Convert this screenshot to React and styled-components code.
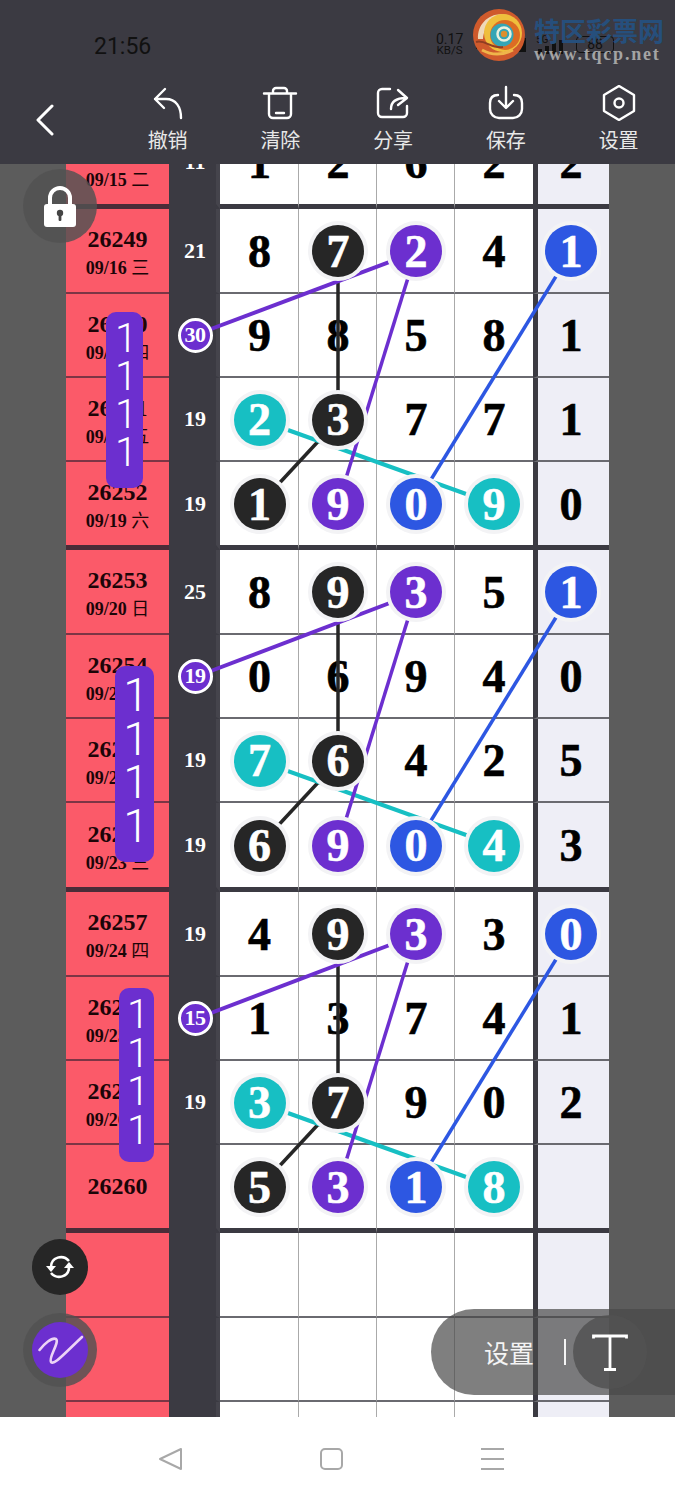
import React from "react"
import styled, { createGlobalStyle } from "styled-components"

const SERIF = '"Liberation Serif", "Noto Sans CJK SC", serif'
const SANS = 'Roboto, "Noto Sans CJK SC", sans-serif'

const DARK = "#3b3a42"
const PURPLE = "#6c2fcf"
const TEAL = "#17bfc3"
const BLUE = "#2d57e2"
const BLACK = "#262626"
const BALL = { k: BLACK, p: PURPLE, t: TEAL, b: BLUE }

const row = (serial, date, week, sum, cells, last, h, marker) => ({ serial, date, week, sum, cells, last, h, marker })

const rows = [
  row("26248", "09/15", "二", "11", ["1", "2", "6", "2"], "2", 89),
  row("26249", "09/16", "三", "21", ["8", "7k", "2p", "4"], "1b", 85),
  row("26250", "09/17", "四", "30", ["9", "8", "5", "8"], "1", 84, true),
  row("26251", "09/18", "五", "19", ["2t", "3k", "7", "7"], "1", 84),
  row("26252", "09/19", "六", "19", ["1k", "9p", "0b", "9t"], "0", 88),
  row("26253", "09/20", "日", "25", ["8", "9k", "3p", "5"], "1b", 85),
  row("26254", "09/21", "一", "19", ["0", "6", "9", "4"], "0", 84, true),
  row("26255", "09/22", "二", "19", ["7t", "6k", "4", "2"], "5", 84),
  row("26256", "09/23", "三", "19", ["6k", "9p", "0b", "4t"], "3", 89),
  row("26257", "09/24", "四", "19", ["4", "9k", "3p", "3"], "0b", 85),
  row("26258", "09/25", "五", "15", ["1", "3", "7", "4"], "1", 84, true),
  row("26259", "09/26", "六", "19", ["3t", "7k", "9", "0"], "2", 84),
  row("26260", "", "", "", ["5k", "3p", "1b", "8t"], "", 88),
  row("", "", "", "", ["", "", "", ""], "", 85),
  row("", "", "", "", ["", "", "", ""], "", 84),
  row("", "", "", "", ["", "", "", ""], "", 84),
]

// y of the ball rows in each block, on the page
const blocks = [
  { top: 252, bottom: 504, mid: 420, marker: 335 },
  { top: 593, bottom: 845, mid: 761, marker: 677 },
  { top: 935, bottom: 1187, mid: 1103, marker: 1019 },
]

const GlobalStyle = createGlobalStyle`
  html, body {
    margin: 0;
    padding: 0;
    background: #fff;
  }
`

const Page = styled.div`
  width: 675px;
  height: 1500px;
  overflow: hidden;
  display: flex;
  flex-direction: column;
  font-family: ${SANS};
`

const Header = styled.header`
  position: relative;
  z-index: 5;
  height: 164px;
  background: ${DARK};
`

const StatusBar = styled.div`
  height: 78px;
  display: flex;
  align-items: center;
  padding: 15px 61px 0 94px;
  box-sizing: border-box;
  color: #111;
`

const Time = styled.div`
  font-size: 23px;
  line-height: 28px;
`

const StatusRight = styled.div`
  margin-left: auto;
  margin-top: -5px;
  display: flex;
  align-items: center;
`

const Speed = styled.div`
  width: 27px;
  margin-right: 13px;
  text-align: center;
  font-size: 14px;
  line-height: 12px;
  small {
    display: block;
    font-size: 11.5px;
    line-height: 10px;
  }
`

const Battery = styled.div`
  width: 38px;
  height: 17px;
  margin-left: 10px;
  border: 1.5px solid #111;
  border-radius: 4px;
  box-sizing: border-box;
  font-size: 14px;
  line-height: 14px;
  text-align: center;
`

const Watermark = styled.div`
  position: absolute;
  left: 473px;
  top: 9px;
  display: flex;
  gap: 9px;
`

const MarkText = styled.div`
  padding-top: 6px;
  strong {
    display: block;
    font-family: "Noto Sans CJK SC", sans-serif;
    font-size: 26px;
    line-height: 30px;
    color: #264f7c;
    white-space: nowrap;
  }
  span {
    display: block;
    margin-top: -1px;
    font-family: ${SERIF};
    font-weight: 700;
    font-size: 18px;
    line-height: 20px;
    letter-spacing: 1.8px;
    color: #a4a4a4;
    white-space: nowrap;
  }
`

const Toolbar = styled.div`
  height: 86px;
  display: flex;
  align-items: flex-start;
  padding: 7px 0 0 36px;
  box-sizing: border-box;
`

const Back = styled.svg`
  width: 18px;
  height: 32px;
  margin-top: 19px;
`

const Tools = styled.div`
  margin-left: auto;
  display: grid;
  grid-template-columns: repeat(5, 112.75px);
`

const Tool = styled.div`
  display: flex;
  flex-direction: column;
  align-items: center;
  gap: 6px;
  color: #e8e8e8;
  font-size: 20px;
  line-height: 28px;
`

const ToolIcon = styled.svg`
  width: 36px;
  height: 36px;
  fill: none;
  stroke: #fff;
  stroke-width: 2.4;
  stroke-linecap: round;
  stroke-linejoin: round;
`

const Main = styled.main`
  position: relative;
  height: 1253px;
  overflow: hidden;
  background: #5c5c5c;
`

const Sheet = styled.div`
  width: 543px;
  margin: -44px 0 0 66px;
`

const Row = styled.div`
  display: grid;
  grid-template-columns: 103px 51px 79px 78px 78px 78px 76px;
  height: ${(p) => p.$h}px;
`

const lineAt = (thin, thick) => (p) =>
  p.$end ? `border-bottom: 5px solid ${thick};` : `border-bottom: 2px solid ${thin};`

const Cell = styled.div`
  box-sizing: border-box;
  display: flex;
  align-items: center;
  justify-content: center;
`

const DateCell = styled(Cell)`
  flex-direction: column;
  background: #fb5a69;
  color: #1c0508;
  font-family: ${SERIF};
  font-weight: 700;
  ${lineAt("#7c3545", "#4a2c38")}
`

const Serial = styled.div`
  font-size: 24px;
  line-height: 29px;
`

const Day = styled.div`
  font-size: 18px;
  line-height: 29px;
  margin-bottom: -7px;
  white-space: nowrap;
  span {
    font-weight: 400;
  }
`

const SumCell = styled(Cell)`
  background: ${DARK};
  border-right: 4px solid #45444c;
  padding-left: 5px;
  color: #fff;
  font-family: ${SERIF};
  font-weight: 700;
  font-size: 22px;
  ${lineAt(DARK, DARK)}
`

const Marker = styled.div`
  position: relative;
  z-index: 2;
  width: 35px;
  height: 35px;
  box-sizing: border-box;
  border: 3px solid #fff;
  border-radius: 50%;
  background: ${PURPLE};
  display: flex;
  align-items: center;
  justify-content: center;
  font-size: 22px;
  letter-spacing: -0.5px;
`

const NumCell = styled(Cell)`
  background: ${(p) => (p.$lastCol ? "#eeeef6" : "#fff")};
  border-right: ${(p) => (p.$rule ? "1px solid #aaa" : "0")};
  border-left: ${(p) => (p.$lastCol ? `5px solid ${DARK}` : "0")};
  padding: 1px ${(p) => (p.$lastCol ? 5 : 0)}px 0 ${(p) => (p.$rule ? 1 : 0)}px;
  color: #000;
  font-family: ${SERIF};
  font-weight: 700;
  font-size: 46px;
  -webkit-text-stroke: 0.6px currentColor;
  ${lineAt("#6a6a70", DARK)}
`

const Ball = styled.div`
  position: relative;
  z-index: 2;
  width: 52px;
  height: 52px;
  border-radius: 50%;
  background: ${(p) => p.$color};
  box-shadow: 0 0 0 4px #f3f3f5;
  color: #fff;
  display: flex;
  align-items: center;
  justify-content: center;
`

const LineLayer = styled.svg`
  position: absolute;
  left: 0;
  top: 0;
  z-index: 1;
  width: 675px;
  height: 1253px;
  pointer-events: none;
`

const Pill = styled.div`
  position: absolute;
  z-index: 3;
  left: ${(p) => p.$left}px;
  top: ${(p) => p.$top}px;
  width: ${(p) => p.$width}px;
  box-sizing: border-box;
  padding: 8px 0 ${(p) => p.$bottom}px 3px;
  border-radius: 10px;
  background: ${PURPLE};
  color: #fff;
  text-align: center;
  font-family: Roboto, sans-serif;
  font-weight: 300;
  font-size: ${(p) => p.$size}px;
  line-height: ${(p) => p.$line}px;
`

const RoundButton = styled.div`
  position: absolute;
  z-index: 3;
  left: ${(p) => p.$left}px;
  top: ${(p) => p.$top}px;
  width: ${(p) => p.$size}px;
  height: ${(p) => p.$size}px;
  border-radius: 50%;
  background: ${(p) => p.$bg};
  display: flex;
  align-items: center;
  justify-content: center;
`

const PenDisc = styled.div`
  width: 56px;
  height: 56px;
  border-radius: 50%;
  background: ${PURPLE};
`

const SettingsPill = styled.div`
  position: absolute;
  z-index: 3;
  left: 431px;
  top: 1145px;
  width: 244px;
  height: 86px;
  box-sizing: border-box;
  padding-left: 53px;
  border-radius: 43px 0 0 43px;
  background: rgba(73, 73, 73, 0.7);
  color: #f4f4f4;
  display: flex;
  align-items: center;
  font-size: 25px;
`

const Divider = styled.div`
  width: 2px;
  height: 26px;
  margin-left: 30px;
  background: #f4f4f4;
`

const TextButton = styled.div`
  width: 74px;
  height: 74px;
  margin-left: 7px;
  flex: none;
  border-radius: 50%;
  background: rgba(82, 82, 82, 0.83);
  display: flex;
  align-items: center;
  justify-content: center;
`

const Nav = styled.nav`
  height: 83px;
  background: #fff;
  padding-right: 12px;
  box-sizing: border-box;
  display: flex;
  align-items: center;
  justify-content: center;
`

const NavIcon = styled.svg`
  width: 161px;
  height: 24px;
  fill: none;
  stroke: #a8a8a8;
  stroke-width: 2;
  stroke-linejoin: round;
`

const Logo = () => (
  <svg width="52" height="52" viewBox="0 0 52 52">
    <circle cx="26" cy="26" r="26" fill="#cf5a2c" />
    <path d="M5 30C4 14 18 2 34 6C22 6 11 15 10 30Z" fill="#efd9b8" />
    <circle cx="30" cy="24" r="19" fill="#efbf3c" />
    <circle cx="32" cy="26" r="15" fill="#dc6c24" />
    <circle cx="29" cy="26" r="11.5" fill="#35a5b5" />
    <circle cx="31" cy="25" r="6.5" fill="none" stroke="#e8f0df" strokeWidth="2.5" />
    <circle cx="31" cy="25" r="3.2" fill="#dd8f2e" />
    <path d="M3 33C12 30 18 40 30 38" fill="none" stroke="#8f3d22" strokeWidth="2" />
    <path d="M9 41C18 46 28 47 40 41" fill="none" stroke="#efb54a" strokeWidth="3" />
  </svg>
)

const Signal = () => (
  <svg width="40" height="20" viewBox="0 0 40 20" fill="#111">
    <text x="10" y="9" fontSize="10" fontFamily="Roboto, sans-serif">5G</text>
    <rect x="12" y="15" width="4" height="5" />
    <rect x="19" y="12" width="4" height="8" />
    <rect x="26" y="9" width="4" height="11" />
    <rect x="33" y="6" width="4" height="14" />
  </svg>
)

const tools = [
  {
    label: "撤销",
    icon: <path d="M15 4L5 14L14 23M5 14H16C26 14 31 22 31 33" />,
  },
  {
    label: "清除",
    icon: (
      <>
        <path d="M2 8.5H34M11 8V6a3 3 0 0 1 3-3h8a3 3 0 0 1 3 3V8" />
        <path d="M7 9V29a4 4 0 0 0 4 4h14a4 4 0 0 0 4-4V9" />
        <path d="M14 28h8" />
      </>
    ),
  },
  {
    label: "分享",
    icon: (
      <>
        <path d="M15 4H7a4 4 0 0 0-4 4V28a4 4 0 0 0 4 4H28a4 4 0 0 0 4-4V21" />
        <path d="M23 5L32 13L23 20M16 24C16 17 20 13 31 13" />
      </>
    ),
  },
  {
    label: "保存",
    icon: (
      <>
        <path d="M10 10C5 10 2 13 2 18V24C2 29 6 33 11 33H25C30 33 34 29 34 24V18C34 13 31 10 26 10" />
        <path d="M18 2V22M11 16L18 23L25 16" />
      </>
    ),
  },
  {
    label: "设置",
    icon: (
      <>
        <path d="M18 1L33 10V26L18 35L3 26V10Z" />
        <circle cx="18" cy="18" r="4.5" />
      </>
    ),
  },
]

const Num = ({ value }) => {
  if (value.length === 2) return <Ball $color={BALL[value[1]]}>{value[0]}</Ball>
  return value
}

const Lines = () => (
  <LineLayer viewBox="0 164 675 1253" fill="none" strokeWidth="3.5">
    {blocks.map((b) => (
      <g key={b.top}>
        <line x1="338" y1={b.top} x2="338" y2={b.mid} stroke={BLACK} />
        <line x1="338" y1={b.mid} x2="260" y2={b.bottom} stroke={BLACK} />
        <line x1="260" y1={b.mid} x2="494" y2={b.bottom} stroke={TEAL} strokeWidth="4" />
        <line x1="195" y1={b.marker} x2="416" y2={b.top} stroke={PURPLE} strokeWidth="4" />
        <line x1="416" y1={b.top} x2="338" y2={b.bottom} stroke={PURPLE} />
        <line x1="571" y1={b.top} x2="416" y2={b.bottom} stroke={BLUE} />
      </g>
    ))}
  </LineLayer>
)

const App = () => {
  return (
    <Page>
      <GlobalStyle />
      <Header>
        <StatusBar>
          <Time>21:56</Time>
          <StatusRight>
            <Speed>
              0.17
              <small>KB/S</small>
            </Speed>
            <svg width="50" height="16" viewBox="0 0 50 16" fill="#111">
              <rect x="0" y="9" width="14" height="4" />
              <rect x="38" y="2" width="12" height="14" />
            </svg>
            <Signal />
            <Battery>88</Battery>
          </StatusRight>
        </StatusBar>
        <Watermark>
          <Logo />
          <MarkText>
            <strong>特区彩票网</strong>
            <span>www.tqcp.net</span>
          </MarkText>
        </Watermark>
        <Toolbar>
          <Back viewBox="0 0 18 32" fill="none" stroke="#fff" strokeWidth="3" strokeLinecap="round" strokeLinejoin="round">
            <path d="M16 2L2 16L16 30" />
          </Back>
          <Tools>
            {tools.map((t) => (
              <Tool key={t.label}>
                <ToolIcon viewBox="0 0 36 36">{t.icon}</ToolIcon>
                {t.label}
              </Tool>
            ))}
          </Tools>
        </Toolbar>
      </Header>

      <Main>
        <Sheet>
          {rows.map((r, i) => {
            const end = r.h >= 88
            return (
              <Row key={i} $h={r.h}>
                <DateCell $end={end}>
                  {r.serial && <Serial>{r.serial}</Serial>}
                  {r.date && (
                    <Day>
                      {r.date} <span>{r.week}</span>
                    </Day>
                  )}
                </DateCell>
                <SumCell $end={end}>{r.marker ? <Marker>{r.sum}</Marker> : r.sum}</SumCell>
                {r.cells.map((c, j) => (
                  <NumCell key={j} $end={end} $rule={j < 3}>
                    <Num value={c} />
                  </NumCell>
                ))}
                <NumCell $end={end} $lastCol>
                  <Num value={r.last} />
                </NumCell>
              </Row>
            )
          })}
        </Sheet>

        <Lines />

        <Pill $left={106} $top={148} $width={37} $size={40} $line={38} $bottom={16}>
          1<br />1<br />1<br />1
        </Pill>
        <Pill $left={115} $top={502} $width={39} $size={46} $line={43.5} $bottom={14}>
          1<br />1<br />1<br />1
        </Pill>
        <Pill $left={119} $top={824} $width={35} $size={40} $line={38.5} $bottom={12}>
          1<br />1<br />1<br />1
        </Pill>

        <RoundButton $left={23} $top={5} $size={74} $bg="rgba(82, 82, 82, 0.83)">
          <svg width="34" height="41" viewBox="0 0 34 41">
            <path d="M7 20V12a10 10 0 0 1 20 0V20" fill="none" stroke="#fff" strokeWidth="4" />
            <rect x="1" y="18" width="32" height="23" rx="3" fill="#fff" />
            <circle cx="17" cy="27" r="3.2" fill="#444" />
            <rect x="15.6" y="28" width="2.8" height="7" rx="1" fill="#444" />
          </svg>
        </RoundButton>
        <RoundButton $left={32} $top={1075} $size={56} $bg={BLACK}>
          <svg width="30" height="30" viewBox="0 0 30 30" fill="none" stroke="#fff" strokeWidth="2.6">
            <path d="M6 15C6 5 18 2 24 9" />
            <path d="M24 15C24 25 12 28 6 21" />
            <path d="M1 14H11L6 20Z" fill="#fff" stroke="none" />
            <path d="M19 16H29L24 10Z" fill="#fff" stroke="none" />
          </svg>
        </RoundButton>
        <RoundButton $left={23} $top={1149} $size={74} $bg="rgba(82, 82, 82, 0.83)">
          <PenDisc>
            <svg width="56" height="56" viewBox="0 0 56 56" fill="none" stroke="#ecd3f6" strokeWidth="2.6" strokeLinecap="round">
              <path d="M7.5 28C12 22 20 15 24 17C28 20 16 36 19 40C22 43 28 36 50 15" />
            </svg>
          </PenDisc>
        </RoundButton>

        <SettingsPill>
          设置
          <Divider />
          <TextButton>
            <svg width="36" height="37" viewBox="0 0 36 37" fill="none" stroke="#fff" strokeWidth="2.8">
              <path d="M1.5 4.5V2H34.5V4.5" />
              <path d="M18 2V35M12 35.5H24" />
            </svg>
          </TextButton>
        </SettingsPill>
      </Main>

      <Nav>
        <NavIcon viewBox="0 0 161 24">
          <path d="M91 2V22L70 12Z" />
        </NavIcon>
        <NavIcon viewBox="0 0 161 24">
          <rect x="70" y="2" width="21" height="20" rx="4" />
        </NavIcon>
        <NavIcon viewBox="0 0 161 24">
          <path d="M69 2H92M69 12H92M69 22H92" />
        </NavIcon>
      </Nav>
    </Page>
  )
}

export default App
